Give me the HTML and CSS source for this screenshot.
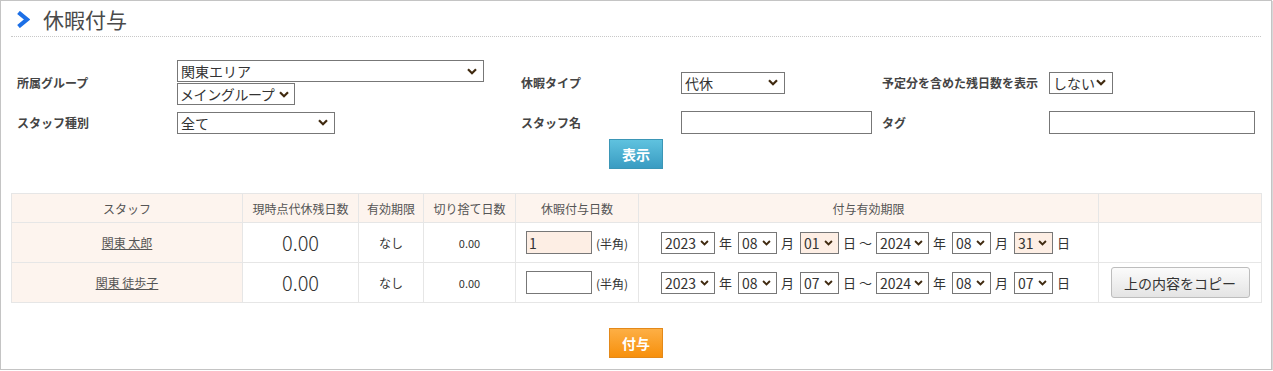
FILE: index.html
```html
<!DOCTYPE html>
<html lang="ja">
<head>
<meta charset="utf-8">
<title>休暇付与</title>
<link rel="stylesheet" href="styles.css">
</head>
<body>
<div class="page">
  <div class="title-bar">
    <svg class="chev" width="14" height="17" viewBox="0 0 14 17"><path d="M2.5 1.5 L11 8.5 L2.5 15.5" fill="none" stroke="#1c6fe6" stroke-width="4.2" stroke-linejoin="miter"/></svg>
    <h1 class="title">休暇付与</h1>
  </div>

  <div class="filters">
    <div class="lbl">所属グループ</div>
    <div class="fld stack">
      <select class="sel w307"><option>関東エリア</option></select>
      <select class="sel w118 tight"><option>メイングループ</option></select>
    </div>
    <div class="lbl">休暇タイプ</div>
    <div class="fld"><select class="sel w104"><option>代休</option></select></div>
    <div class="lbl">予定分を含めた残日数を表示</div>
    <div class="fld"><select class="sel w64"><option>しない</option></select></div>

    <div class="lbl">スタッフ種別</div>
    <div class="fld"><select class="sel w158"><option>全て</option></select></div>
    <div class="lbl">スタッフ名</div>
    <div class="fld"><input class="txt w191" type="text"></div>
    <div class="lbl">タグ</div>
    <div class="fld"><input class="txt w206" type="text"></div>
  </div>

  <div class="btn-row"><button class="btn btn-blue">表示</button></div>

  <table class="grid">
    <colgroup>
      <col class="c1"><col class="c2"><col class="c3"><col class="c4"><col class="c5"><col class="c6"><col class="c7">
    </colgroup>
    <thead>
      <tr><th>スタッフ</th><th>現時点代休残日数</th><th>有効期限</th><th>切り捨て日数</th><th>休暇付与日数</th><th>付与有効期限</th><th></th></tr>
    </thead>
    <tbody>
      <tr>
        <td class="name"><a href="#">関東 太郎</a></td>
        <td class="big">0.00</td>
        <td>なし</td>
        <td class="small">0.00</td>
        <td><input class="txt w66 hl" type="text" value="1"><span class="note">(半角)</span></td>
        <td>
          <div class="dates">
            <select class="sel ds w54"><option>2023</option></select><span class="u">年</span>
            <select class="sel ds w39"><option>08</option></select><span class="u">月</span>
            <select class="sel ds w39 hl"><option>01</option></select><span class="u u2">日 ～</span>
            <select class="sel ds w53"><option>2024</option></select><span class="u">年</span>
            <select class="sel ds w39"><option>08</option></select><span class="u">月</span>
            <select class="sel ds w39 hl"><option>31</option></select><span class="u">日</span>
          </div>
        </td>
        <td></td>
      </tr>
      <tr>
        <td class="name"><a href="#">関東 徒歩子</a></td>
        <td class="big">0.00</td>
        <td>なし</td>
        <td class="small">0.00</td>
        <td><input class="txt w66" type="text"><span class="note">(半角)</span></td>
        <td>
          <div class="dates">
            <select class="sel ds w54"><option>2023</option></select><span class="u">年</span>
            <select class="sel ds w39"><option>08</option></select><span class="u">月</span>
            <select class="sel ds w39"><option>07</option></select><span class="u u2">日 ～</span>
            <select class="sel ds w53"><option>2024</option></select><span class="u">年</span>
            <select class="sel ds w39"><option>08</option></select><span class="u">月</span>
            <select class="sel ds w39"><option>07</option></select><span class="u">日</span>
          </div>
        </td>
        <td><button class="btn btn-copy">上の内容をコピー</button></td>
      </tr>
    </tbody>
  </table>

  <div class="btn-row submit"><button class="btn btn-orange">付与</button></div>
</div>
</body>
</html>
```

FILE: styles.css
```css
html, body {
  margin: 0;
  padding: 0;
  background: #fff;
}
body {
  font-family: "Noto Sans CJK JP", "Noto Sans", sans-serif;
  color: #333;
  font-size: 12px;
}
.page {
  box-sizing: border-box;
  width: 1272px;
  height: 370px;
  border: 1px solid #c4c4c4;
  box-shadow: 1px 1px 0 #d8d8d8;
  padding: 0 10px;
}
.title-bar {
  display: flex;
  align-items: center;
  height: 35px;
  border-bottom: 1px dotted #c8c8c8;
  padding-left: 5px;
}
.chev {
  display: block;
  margin-top: 1px;
}
.title {
  margin: 0 0 0 13px;
  font-size: 21px;
  font-weight: normal;
  color: #4a4a4a;
  line-height: 30px;
}

.filters {
  display: grid;
  grid-template-columns: 160px 344px 160px 201px 167px 1fr;
  row-gap: 6px;
  align-items: center;
  margin-top: 23px;
  padding-left: 6px;
}
.lbl {
  font-weight: bold;
  font-size: 12px;
  color: #444;
}
.fld.stack {
  display: flex;
  flex-direction: column;
  align-items: flex-start;
  gap: 1px;
}
.sel {
  box-sizing: border-box;
  -webkit-appearance: none;
  appearance: none;
  height: 22px;
  border: 1px solid #777;
  border-radius: 0;
  background-color: #fff;
  background-image: url("data:image/svg+xml;utf8,<svg xmlns='http://www.w3.org/2000/svg' width='10' height='7' viewBox='0 0 10 7'><path d='M1 1.2 L5 5.2 L9 1.2' fill='none' stroke='%23402a10' stroke-width='2.2'/></svg>");
  background-repeat: no-repeat;
  background-position: right 6px center;
  background-size: 10px 7px;
  font-family: "Noto Sans CJK JP", sans-serif;
  font-size: 14px;
  line-height: 20px;
  color: #333;
  padding: 0 0 0 3px;
  margin: 0;
}
.sel.tight {
  letter-spacing: -0.4px;
  padding-left: 2px;
  background-position: right 5px center;
}
.sel.hl { background-color: #fdeee4; }
.txt {
  box-sizing: border-box;
  height: 23px;
  border: 1px solid #777;
  border-radius: 0;
  background: #fff;
  font-family: "Noto Sans CJK JP", sans-serif;
  font-size: 14px;
  color: #333;
  padding: 0 2px;
  margin: 0;
}
.txt.hl { background: #fdeee4; }
.w307 { width: 307px; }
.w118 { width: 118px; }
.w158 { width: 158px; }
.w104 { width: 104px; }
.w64 { width: 64px; }
.w191 { width: 191px; }
.w206 { width: 206px; }
.w66 { width: 66px; }
.w54 { width: 54px; }
.w53 { width: 53px; }
.w39 { width: 39px; }

.btn-row {
  display: flex;
  justify-content: center;
  margin-top: 5px;
}
.btn {
  font-family: "Noto Sans CJK JP", sans-serif;
  cursor: pointer;
}
.btn-blue {
  width: 54px;
  height: 30px;
  border: 1px solid #3b96b6;
  background: linear-gradient(#5fc2df, #3a9cc2);
  color: #fff;
  font-size: 14px;
  font-weight: bold;
  padding: 0;
}
.btn-orange {
  width: 54px;
  height: 30px;
  border: 1px solid #e3891a;
  background: linear-gradient(#fdaf45, #f7900c);
  color: #fff;
  font-size: 14px;
  font-weight: bold;
  padding: 0;
}
.submit { margin-top: 25px; }

.grid {
  margin-top: 24px;
  width: 1250px;
  border-collapse: collapse;
  table-layout: fixed;
}
.c1 { width: 231px; }
.c2 { width: 116px; }
.c3 { width: 65px; }
.c4 { width: 92px; }
.c5 { width: 123px; }
.c6 { width: 460px; }
.c7 { width: 163px; }
.grid th, .grid td {
  border: 1px solid #e6e6e6;
  text-align: center;
  padding: 0;
}
.grid th {
  height: 28px;
  background: #fdf4ee;
  font-weight: normal;
  color: #555;
  font-size: 12px;
}
.grid td {
  height: 39px;
  font-size: 12px;
  color: #333;
}
.grid td.name { background: #fdf4ee; }
.name a {
  color: #555;
  text-decoration: underline;
}
.big { font-size: 20px !important; font-weight: 300; }
.small { font-size: 11px !important; }
.note {
  font-size: 12px;
  margin-left: 4px;
  color: #333;
}
.dates {
  display: flex;
  align-items: center;
  justify-content: center;
}
.ds {
  font-size: 14px;
  padding-left: 3px;
  background-position: right 5px center;
  background-size: 9px 6px;
}
.u {
  font-size: 13px;
  margin: 0 6px 0 4px;
  color: #333;
}
.u2 { margin-right: 4px; }
.btn-copy {
  width: 139px;
  height: 31px;
  border: 1px solid #bdbdbd;
  border-radius: 3px;
  background: linear-gradient(#fbfbfb, #e4e4e4);
  color: #333;
  font-size: 14px;
  padding: 0;
}
```
